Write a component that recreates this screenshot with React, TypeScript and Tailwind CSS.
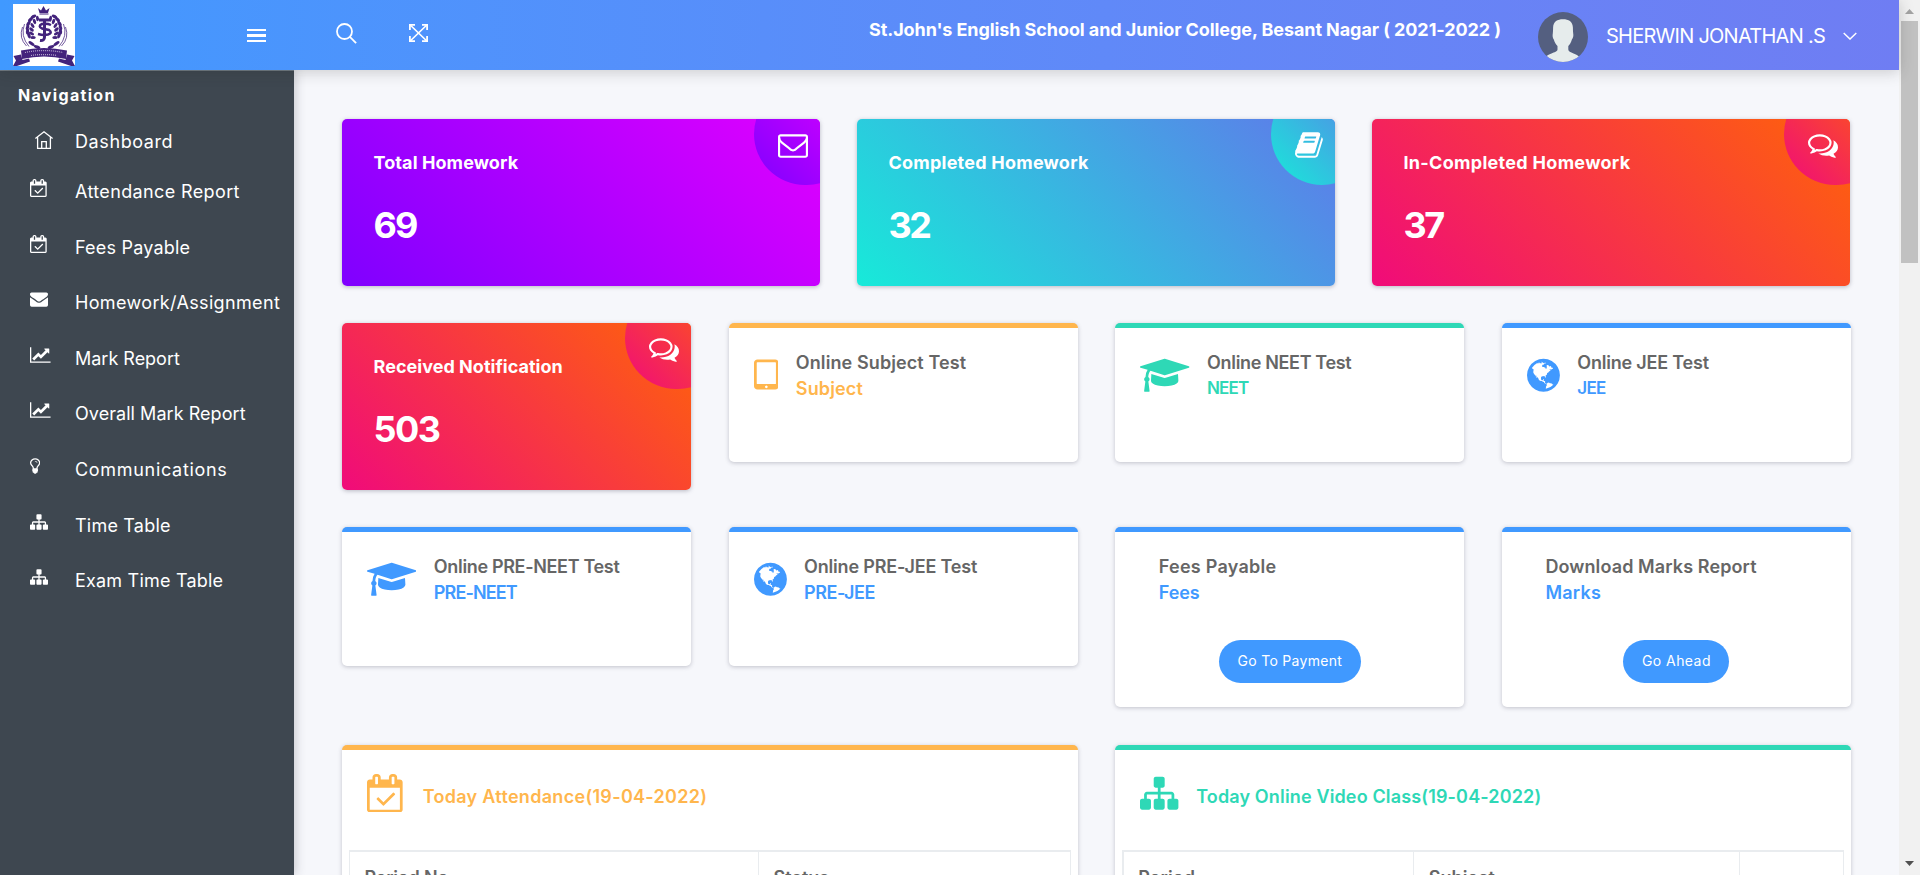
import type { ReactNode } from 'react';

type IconDef = { w: number; d: string };

const ICONS = {
  envelopeO: {
    w: 1792,
    d: 'M1664 1504v-768q-32 36-69 66-268 206-426 338-51 43-83 67t-86.500 48.500-102.500 24.500h-2q-48 0-102.500-24.500t-86.500-48.500-83-67q-158-132-426-338-37-30-69-66v768q0 13 9.500 22.500t22.500 9.500h1472q13 0 22.500-9.500t9.500-22.500zm0-1051v-24.500l-.5-13-3-12.500-5.500-9-9-7.500-14-2.500h-1472q-13 0-22.500 9.500t-9.500 22.500q0 168 147 284 193 152 401 317 6 5 35 29.500t46 37.500 44.500 31.500 50.500 27.500 43 9h2q20 0 43-9t50.500-27.500 44.500-31.500 46-37.500 35-29.500q208-165 401-317 54-43 100.500-115.500t46.500-131.500zm128-37v1088q0 66-47 113t-113 47h-1472q-66 0-113-47t-47-113v-1088q0-66 47-113t113-47h1472q66 0 113 47t47 113z',
  },
  envelope: {
    w: 1792,
    d: 'M1792 710v794q0 66-47 113t-113 47h-1472q-66 0-113-47t-47-113v-794q44 49 101 87 362 246 497 345 57 42 92.500 65.500t94.500 48 110 24.500h2q51 0 110-24.500t94.500-48 92.500-65.500q170-123 498-345 57-39 100-87zm0-294q0 79-49 151t-122 123q-376 261-468 325-10 7-42.500 30.500t-54 38-52 32.500-57.500 27-50 9h-2q-23 0-50-9t-57.500-27-52-32.500-54-38-42.500-30.500q-91-64-262-182.500t-205-142.500q-62-42-117-115.500t-55-136.500q0-78 41.500-130t118.500-52h1472q65 0 112.500 47t47.500 113z',
  },
  lineChart: {
    w: 2048,
    d: 'M2048 1536v128h-2048v-1536h128v1408h1920zm-128-1248v435q0 21-19.500 29.500t-35.500-7.500l-121-121-633 633q-10 10-23 10t-23-10l-233-233-416 416-192-192 585-585q10-10 23-10t23 10l233 233 464-464-121-121q-16-16-7.500-35.500t29.500-19.500h435q14 0 23 9t9 23z',
  },
  sitemap: {
    w: 1792,
    d: 'M1792 1248v320q0 40-28 68t-68 28h-320q-40 0-68-28t-28-68v-320q0-40 28-68t68-28h96v-192h-512v192h96q40 0 68 28t28 68v320q0 40-28 68t-68 28h-320q-40 0-68-28t-28-68v-320q0-40 28-68t68-28h96v-192h-512v192h96q40 0 68 28t28 68v320q0 40-28 68t-68 28h-320q-40 0-68-28t-28-68v-320q0-40 28-68t68-28h96v-192q0-52 38-90t90-38h512v-192h-96q-40 0-68-28t-28-68v-320q0-40 28-68t68-28h320q40 0 68 28t28 68v320q0 40-28 68t-68 28h-96v192h512q52 0 90 38t38 90v192h96q40 0 68 28t28 68z',
  },
  calendar: {
    w: 1664,
    d: 'M1303 964l-512 512q-10 9-23 9t-23-9l-288-288q-9-10-9-23t9-22l46-46q9-9 22-9t23 9l220 220 444-444q10-9 23-9t22 9l46 46q9 9 9 22t-9 23zm-1175 700h1408v-1024h-1408v1024zm384-1216v-288q0-14-9-23t-23-9h-64q-14 0-23 9t-9 23v288q0 14 9 23t23 9h64q14 0 23-9t9-23zm768 0v-288q0-14-9-23t-23-9h-64q-14 0-23 9t-9 23v288q0 14 9 23t23 9h64q14 0 23-9t9-23zm384-64v1280q0 52-38 90t-90 38h-1408q-52 0-90-38t-38-90v-1280q0-52 38-90t90-38h128v-96q0-66 47-113t113-47h64q66 0 113 47t47 113v96h384v-96q0-66 47-113t113-47h64q66 0 113 47t47 113v96h128q52 0 90 38t38 90z',
  },
  comments: {
    w: 1792,
    d: 'M704 384q-153 0-286 52t-211.500 141-78.500 191q0 82 53 158t149 132l97 56-35 84q34-20 62-39l44-31 53 10q78 14 153 14 153 0 286-52t211.500-141 78.500-191-78.500-191-211.500-141-286-52zm0-128q191 0 353.500 68.500t256.500 186.500 94 257-94 257-256.500 186.500-353.500 68.500q-86 0-176-16-124 88-278 128-36 9-86 16h-3q-11 0-20.500-8t-11.500-21q-1-3-1-6.500t.5-6.500 2-6l2.500-5 3.500-5.500 4-5 4.500-5 4-4.500q5-6 23-25t26-29.500 22.500-29 25-38.500 20.500-44q-124-72-195-177t-71-224q0-139 94-257t256.500-186.500 353.500-68.500zm822 1169q10 24 20.500 44t25 38.500 22.500 29 26 29.500 23 25q1 1 4 4.500t4.500 5 4 5 3.500 5.500l2.500 5 2 6 .5 6.500-1 6.500q-3 14-13 22t-22 7q-50-7-86-16-154-40-278-128-90 16-176 16-271 0-472-132 58 4 88 4 161 0 309-45t264-129q125-92 192-212t67-254q0-77-23-152 129 71 204 178t75 230q0 120-71 224.500t-195 176.500z',
  },
  tablet: {
    w: 1152,
    d: 'M640 1440q0-26-19-45t-45-19-45 19-19 45 19 45 45 19 45-19 19-45zm384-160v-960q0-13-9.500-22.500t-22.500-9.500h-832q-13 0-22.500 9.500t-9.500 22.500v960q0 13 9.500 22.500t22.500 9.500h832q13 0 22.500-9.500t9.500-22.500zm128-960v1088q0 66-47 113t-113 47h-832q-66 0-113-47t-47-113v-1088q0-66 47-113t113-47h832q66 0 113 47t47 113z',
  },
  gradCap: {
    w: 2304,
    d: 'M1774 836l18 316q4 69-82 128t-235 93.500-323 34.500-323-34.500-235-93.500-82-128l18-316 574 181q22 7 48 7t48-7zm530-324q0 23-22 31l-1120 352q-4 1-10 1t-10-1l-652-206q-43 34-71 111.500t-34 178.500q63 36 63 109 0 69-58 107l58 433q2 14-8 25-9 11-24 11h-192q-15 0-24-11-10-11-8-25l58-433q-58-38-58-107 0-73 65-111 11-207 98-330l-333-104q-22-8-22-31t22-31l1120-352q4-1 10-1t10 1l1120 352q22 8 22 31z',
  },
  book: {
    w: 1664,
    d: 'M1639 478q40 57 18 129l-275 906q-19 64-76.500 107.500t-122.500 43.500h-923q-77 0-148.500-53.500t-99.500-131.500q-24-67-2-127 0-4 3-27t4-37q1-8-3-21.500t-3-19.500q2-11 8-21t16.500-23.500 16.500-23.500q23-38 45-91.500t30-91.500q3-10 .5-30t-.5-28q3-11 17-28t17-23q21-36 42-92t25-90q1-9-2.500-32t.5-28q4-13 22-30.500t22-22.500q19-26 42.500-84.500t27.500-96.500q1-8-3-25.500t-2-26.500q2-8 9-18t18-23 17-21q8-12 16.500-30.500t15-35 16-36 19.500-32 26.500-23.500 36-11.500 47.500 5.500l-1 3q38-9 51-9h761q74 0 114 56t18 130l-274 906q-36 119-71.500 153.500t-128.500 34.500h-869q-27 0-38 15-11 16-1 43 24 70 144 70h923q29 0 56-15.500t35-41.500l300-987q7-22 5-57 38 15 59 43zm-1064 2q-4 13 2 22.500t20 9.500h608q13 0 25.500-9.500t16.500-22.500l21-64q4-13-2-22.500t-20-9.500h-608q-13 0-25.500 9.500t-16.500 22.500zm-83 256q-4 13 2 22.500t20 9.500h608q13 0 25.500-9.500t16.500-22.500l21-64q4-13-2-22.500t-20-9.500h-608q-13 0-25.500 9.500t-16.500 22.500z',
  },
  bulb: {
    w: 1024,
    d: 'M736 576q0 13-9.500 22.500t-22.500 9.500-22.500-9.500-9.500-22.500q0-46-54-71t-106-25q-13 0-22.500-9.500t-9.500-22.500 9.500-22.500 22.500-9.500q50 0 99.500 16t87 54 37.500 90zm160 0q0-72-34.500-134t-90-101.500-123-62-136.500-22.500-136.500 22.500-123 62-90 101.500-34.500 134q0 101 68 180 10 11 30.500 33t30.500 33q128 153 141 298h228q13-145 141-298 10-11 30.500-33t30.500-33q68-79 68-180zm128 0q0 155-103 268-45 49-74.500 87t-59.500 95.500-34 107.500q47 28 47 82 0 37-25 64 25 27 25 64 0 52-45 81 13 23 13 47 0 46-31.500 71t-77.500 25q-20 44-60 70t-87 26-87-26-60-70q-46 0-77.500-25t-31.500-71q0-24 13-47-45-29-45-81 0-37 25-64-25-27-25-64 0-54 47-82-4-50-34-107.500t-59.500-95.500-74.500-87q-103-113-103-268 0-99 44.500-184.500t117-142 164-89 186.500-32.500 186.500 32.500 164 89 117 142 44.500 184.500z',
  },
} satisfies Record<string, IconDef>;

type IconName = keyof typeof ICONS;

function Icon({ name, className }: { name: IconName; className: string }) {
  const { w, d } = ICONS[name];
  return (
    <svg viewBox={`0 0 ${w} 1792`} className={`w-auto shrink-0 fill-current ${className}`}>
      <path d={d} />
    </svg>
  );
}

function Globe() {
  return (
    <svg viewBox="128 0 1536 1792" className="h-[38.4px] w-auto shrink-0 fill-current">
      <path d="M896 128q209 0 385.500 103t279.500 279.500 103 385.500-103 385.500-279.500 279.500-385.500 103-385.500-103-279.500-279.500-103-385.500 103-385.500 279.500-279.500 385.500-103zm274 521q-2 1-9.500 9.500t-13.500 9.500q2 0 4.500-5t5-11 3.500-7q6-7 22-15 14-6 52-12 34-8 51 11-2-2 9.500-13t14.500-12q3-2 15-4.500t15-7.500l2-22q-12 1-17.500-7t-6.500-21q0 2-6 8 0-7-4.500-8t-11.500 1-9 1q-10-3-15-7.500t-8-16.500-4-15q-2-5-9.500-11t-9.500-10q-1-2-2.500-5.500t-3-6.500-4-5.500-5.500-2.500-7 5-7.500 10-4.500 5q-3-2-6-1.500t-4.500 1-4.500 3-5 3.500q-3 2-8.500 3t-8.500 2q15-5-1-11-10-4-16-3 9-4 7.500-12t-8.500-14h5q-1-4-8.500-8.500t-17.500-8.500-13-6q-8-5-34-9.500t-33-.5q-5 6-4.500 10.500t4 14 3.500 12.500q1 6-5.500 13t-6.500 12q0 7 14 15.500t10 21.500q-3 8-16 16t-16 12q-5 8-1.500 18.500t10.500 16.500q2 2 1.500 4t-3.500 4.500-5.500 4-6.500 3.500l-3 2q-11 5-20.500-6t-13.500-26q-7-25-16-30-23-8-29 1-5-13-41-26-25-9-58-4 6-1 0-15-7-15-19-12 3-6 4-17.500t1-13.500q3-13 12-23 1-1 7-8.500t9.500-13.500.5-6q35 4 50-11 5-5 11.500-17t10.500-17q9-6 14-5.500t14.500 5.500 14.500 5q14 1 15.500-11t-7.500-20q12 1 3-17-4-7-8-9-12-4-27 5-8 4 2 8-1-1-9.500 10.500t-16.500 17.500-16-5q-1-1-5.500-13.500t-9.500-13.500q-8 0-16 15 3-8-11-15t-24-8q19-12-8-27-7-4-20.500-5t-19.500 4q-5 7-5.500 11.500t5 8 10.500 5.500 11.500 4 8.500 3q14 10 8 14-2 1-8.500 3.500t-11.500 4.500-6 4q-3 4 0 14t-2 14q-5-5-9-17.500t-7-16.500q7 9-25 6l-10-1q-4 0-16 2t-20.500 1-13.500-8q-4-8 0-20 1-4 4-2-4-3-11-9.500t-10-8.500q-46 15-94 41 6 1 12-1 5-2 13-6.500t10-5.500q34-14 42-7l5-5q14 16 20 25-7-4-30-1-20 6-22 12 7 12 5 18-4-3-11.500-10t-14.500-11-15-5q-16 0-22 1-146 80-235 222 7 7 12 8 4 1 5 9t2.500 11 11.500-3q9 8 3 19 1-1 44 27 19 17 21 21 3 11-10 18-1-2-9-9t-9-4q-3 5 .5 18.500t10.500 12.500q-7 0-9.500 16t-2.500 35.500-1 23.500l2 1q-3 12 5.500 34.500t21.500 19.500q-13 3 20 43 6 8 8 9 3 2 12 7.500t15 10 10 10.500q4 5 10 22.500t14 23.500q-2 6 9.500 20t10.500 23q-1 0-2.500 1t-2.500 1q3 7 15.500 14t15.500 13q1 3 2 10t3 11 8 2q2-20-24-62-15-25-17-29-3-5-5.500-15.500t-4.500-14.500q2 0 6 1.500t8.500 3.500 7.500 4 2 3q-3 7 2 17.500t12 18.500 17 19 12 13q6 6 14 19.500t0 13.500q9 0 20 10.500t17 19.500q5 8 8 26t5 24q2 7 8.500 13.500t12.500 9.500l16 8 13 7q5 2 18.500 10.500t21.500 11.500q10 4 16 4t14.500-2.500 13.500-3.500q15-2 29 15t21 21q36 19 55 11-2 1 .5 7.500t8 15.500 9 14.500 5.500 8.500q5 6 18 15t18 15q6-4 7-9-3 8 7 20t18 10q14-3 14-32-31 15-49-18 0-1-2.500-5.500t-4-8.500-2.500-8.500 0-7.500 5-3q9 0 10-3.500t-2-12.500-4-13q-1-8-11-20t-12-15q-5 9-16 8t-16-9q0 1-1.500 5.500t-1.500 6.500q-13 0-15-1 1-3 2.500-17.500t3.500-22.500q1-4 5.500-12t7.500-14.500 4-12.500-4.500-9.500-17.500-2.500q-19 1-26 20-1 3-3 10.500t-5 11.500-9 7q-7 3-24 2t-24-5q-13-8-22.500-29t-9.500-37q0-10 2.500-26.500t3-25-5.500-24.500q3-2 9-9.500t10-10.500q2-1 4.500-1.500t4.500 0 4-1.500 3-6q-1-1-4-3-3-3-4-3 7 3 28.500-1.500t27.500 1.500q15 11 22-2 0-1-2.500-9.500t-.5-13.500q5 27 29 9 3 3 15.500 5t17.500 5q3 2 7 5.500t5.500 4.500 5-.5 8.500-6.500q10 14 12 24 11 40 19 44 7 3 11 2t4.500-9.500 0-14-1.500-12.500l-1-8v-18l-1-8q-15-3-18.500-12t1.500-18.500 15-18.500q1-1 8-3.500t15.500-6.500 12.500-8q21-19 15-35 7 0 11-9-1 0-5-3t-7.500-5-4.500-2q9-5 2-16 5-3 7.500-11t7.500-10q9 12 21 2 8-8 1-16 5-7 20.500-10.500t18.500-9.500q7 2 8-2t1-12 3-12q4-5 15-9t13-5l17-11q3-4 0-4 18 2 31-11 10-11-6-20 3-6-3-9.500t-15-5.500q3-1 11.500-.5t10.500-1.500q15-10-7-16-17-5-43 12zm-163 877q206-36 351-189-3-3-12.500-4.500t-12.500-3.500q-18-7-24-8 1-7-2.500-13t-8-9-12.500-8-11-7q-2-2-7-6t-7-5.500-7.500-4.500-8.500-2-10 1l-3 1q-3 1-5.500 2.500t-5.500 3-4 3 0 2.500q-21-17-36-22-5-1-11-5.500t-10.500-7-10-1.500-11.500 7q-5 5-6 15t-2 13q-7-5 0-17.500t2-18.500q-3-6-10.500-4.500t-12 4.500-11.500 8.500-9 6.500-8.500 5.500-8.500 7.500q-3 4-6 12t-5 11q-2-4-11.500-6.500t-9.500-5.500q2 10 4 35t5 38q7 31-12 48-27 25-29 40-4 22 12 26 0 7-8 20.500t-7 21.500q0 6 2 16z" />
    </svg>
  );
}

function HomeIcon() {
  return (
    <svg viewBox="0 0 18 18" className="size-[18px] shrink-0 fill-none stroke-white" strokeWidth="1.3">
      <path d="M.4 7.600 9 .8l8.600 6.800M2.600 6.200v11.200h12.800V6.200M6.700 17.400v-6.700h4.600v6.700" />
    </svg>
  );
}

const LEAVES = [
  [16, 58, -20], [13, 50, 5], [13, 42, 20], [15, 34, 35], [19, 26, 50], [25, 20, 62],
];

function Logo() {
  return (
    <svg viewBox="0 0 124 124" className="size-[62px] shrink-0 bg-white">
      <g fill="#43237c">
        <path d="M50 8l6 5 5-9 5 9 7-5-3 10H53z" />
        <path d="M53 19h18v2H53z" />
        {LEAVES.map(([x, y, r], i) => (
          <g key={i}>
            <ellipse cx={x + 16} cy={y + 5} rx="3.2" ry="6" transform={`rotate(${r} ${x + 16} ${y + 5})`} />
            <ellipse cx={x + 24} cy={y + 9} rx="3" ry="5.500" transform={`rotate(${r - 70} ${x + 24} ${y + 9})`} />
            <ellipse cx={108 - x} cy={y + 5} rx="3.200" ry="6" transform={`rotate(${-r} ${108 - x} ${y + 5})`} />
            <ellipse cx={100 - x} cy={y + 9} rx="3" ry="5.500" transform={`rotate(${70 - r} ${100 - x} ${y + 9})`} />
          </g>
        ))}
        <ellipse cx="37" cy="79" rx="3" ry="7" transform="rotate(-55 37 79)" />
        <ellipse cx="87" cy="79" rx="3" ry="7" transform="rotate(55 87 79)" />
        <ellipse cx="48" cy="86" rx="3" ry="7" transform="rotate(-70 48 86)" />
        <ellipse cx="76" cy="86" rx="3" ry="7" transform="rotate(70 76 86)" />
        <path d="M16 93q46-10 92 0l-2 17q-44-10-88 0z" />
        <path d="M1 104l15-3 3 11 13-3 2 6-26 9-8 0 6-11zM123 104l-15-3-3 11-13-3-2 6 26 9 8 0-6-11z" />
      </g>
      <g fill="none" stroke="#43237c">
        <path d="M19 46q-8 22 8 38M23 40q-9 24 9 45M105 46q8 22-8 38M101 40q9 24-9 45" strokeWidth="1.500" />
        <path d="M52 32h24M63 32v34q0 8-9 7" strokeWidth="6" />
        <path d="M76 42q-8-4-18-2-9 4 0 9l14 3q8 6-2 9-9 2-20-1" strokeWidth="5" />
      </g>
      <path d="M24 97q38-8 76 0M36 103q26-4 52 0" fill="none" stroke="#fff" strokeWidth="2.500" strokeDasharray="2 2" opacity=".6" />
    </svg>
  );
}

function Avatar() {
  return (
    <svg viewBox="0 0 50 50" className="size-[50px] shrink-0 rounded-full bg-[#545f80]">
      <path
        d="M25 7.300c5.500 0 9.800 2.200 9.900 8.200 0 2 .1 4 .3 6 .5 2-.1 4.500-1.300 6-.8 2.800-2 4.900-3.600 6.500v3.500c0 1.800 2.300 2.900 5.200 3.900 2.600.9 4.500 1.800 6 3.600V50h-34v-5c1.500-1.800 3.400-2.700 6-3.600 2.900-1 6-2.100 6-3.900V34c-1.600-1.600-2.900-3.700-3.700-6.500-1.200-1.500-1.400-4-1-6 .2-2 .3-4 .3-6C15.200 9.500 19.500 7.300 25 7.300z"
        fill="#e6ecec"
      />
    </svg>
  );
}

function Header() {
  return (
    <header className="relative z-10 flex h-[70px] shrink-0 items-start bg-linear-to-r from-[#4099ff] to-[#6f7df3] text-white shadow-[0_2px_14px_rgba(43,43,43,0.22)]">
      <div className="flex h-[70px] w-[294px] items-start justify-between pt-1 pr-7 pl-[13px]">
        <Logo />
        <div className="mt-[24.500px] flex w-[19px] flex-col gap-[3px]">
          <div className="h-[2.600px] bg-white" />
          <div className="h-[2.600px] bg-white" />
          <div className="h-[2.600px] bg-white" />
        </div>
      </div>
      <svg viewBox="0 0 21 21" className="mt-[22.500px] ml-[42px] size-[21px] fill-none stroke-white" strokeWidth="1.800">
        <circle cx="8.500" cy="8.500" r="7.500" />
        <path d="M13.900 13.900l6.200 6.200" />
      </svg>
      <svg viewBox="0 0 19 18" className="mt-6 ml-[52px] h-[18px] w-[19px] fill-none stroke-white" strokeWidth="1.700">
        <path d="M1.200 1l16.600 16M17.800 1L1.200 17" />
        <path d="M.9 6V.9H6M13 .9h5.100V6M.9 12v5.100H6M13 17.100h5.100V12" strokeWidth="1.800" />
      </svg>
      <div className="ml-auto pt-[18px] text-lg leading-6 font-bold tracking-[-0.085px] whitespace-nowrap">
        St.John's English School and Junior College, Besant Nagar ( 2021-2022 )
      </div>
      <div className="mt-3 ml-[37.500px]">
        <Avatar />
      </div>
      <div className="mt-[24px] ml-[17.500px] text-xl leading-6 tracking-[-0.740px] whitespace-nowrap">
        SHERWIN JONATHAN .S
      </div>
      <svg viewBox="0 0 14 8" className="mt-8 mr-[42px] ml-[18px] h-2 w-[14px] fill-none stroke-white" strokeWidth="1.400">
        <path d="M.7.900L7 7.100 13.300.9" />
      </svg>
    </header>
  );
}

const NAV: { icon: IconName; label: string; track: string }[] = [
  { icon: 'calendar', label: 'Attendance Report', track: 'tracking-[0.370px]' },
  { icon: 'calendar', label: 'Fees Payable', track: 'tracking-[0.200px]' },
  { icon: 'envelope', label: 'Homework/Assignment', track: 'tracking-[0.350px]' },
  { icon: 'lineChart', label: 'Mark Report', track: 'tracking-[-0.010px]' },
  { icon: 'lineChart', label: 'Overall Mark Report', track: 'tracking-[0.050px]' },
  { icon: 'bulb', label: 'Communications', track: 'tracking-[0.690px]' },
  { icon: 'sitemap', label: 'Time Table', track: 'tracking-[0.210px]' },
  { icon: 'sitemap', label: 'Exam Time Table', track: 'tracking-[0.200px]' },
];

function Sidebar() {
  return (
    <nav className="w-[294px] shrink-0 border-t border-[#717b83] bg-[#3e4750] text-lg text-white shadow-[1px_0_10px_rgba(43,43,60,0.25)]">
      <div className="flex h-[48.300px] items-center pl-[18px] text-base font-bold tracking-[1.330px]">Navigation</div>
      <div className="flex h-[44.400px] items-center">
        <div className="w-[75px] pb-[2px] pl-[35px]">
          <HomeIcon />
        </div>
        <span className="pt-px tracking-[0.600px]">Dashboard</span>
      </div>
      {NAV.map((n) => (
        <div key={n.label} className="flex h-[55.600px] items-center">
          <div className="w-[75px] pb-[7px] pl-[30px]">
            <Icon name={n.icon} className="h-[18px]" />
          </div>
          <span className={`pt-px whitespace-nowrap ${n.track}`}>{n.label}</span>
        </div>
      ))}
    </nav>
  );
}

function StatCard({
  title, track, value, valueTrack, bg, icon, badge,
}: {
  title: string; track: string; value: string; valueTrack: string; bg: string; icon: IconName; badge: string;
}) {
  return (
    <div className={`relative h-[166.500px] overflow-hidden rounded-[5px] pt-8 pl-[31.500px] text-white shadow-[0_1px_4px_rgba(69,70,92,0.35)] ${bg}`}>
      <div className={`text-lg leading-6 font-bold ${track}`}>{title}</div>
      <div className={`mt-[25.500px] text-4xl leading-[48px] font-bold ${valueTrack}`}>{value}</div>
      <div className={`absolute -top-9 -right-[38px] h-[102px] rounded-full pt-[47px] pl-6 ${badge} ${bg}`}>
        <Icon name={icon} className="h-[30px]" />
      </div>
    </div>
  );
}

function Card({ border, className, children }: { border: string; className: string; children: ReactNode }) {
  return (
    <div className={`rounded-[5px] border-t-[5px] bg-white shadow-[0_1px_4px_rgba(69,70,92,0.3)] ${border} ${className}`}>
      {children}
    </div>
  );
}

function TestCard({
  border, tone, icon, gap, title, titleTrack, sub, subTrack, action, actionTrack,
}: {
  border: string; tone: string; icon?: ReactNode; gap: string; title: string; titleTrack: string;
  sub: string; subTrack: string; action?: string; actionTrack?: string;
}) {
  return (
    <Card border={border} className={`self-start pt-[22px] ${action ? 'h-[180px]' : 'h-[138.500px]'}`}>
      <div className={`flex items-start pl-[25px] ${tone}`}>
        {icon && <div className="mt-[5.500px]">{icon}</div>}
        <div className={`text-lg leading-[25.600px] font-semibold whitespace-nowrap ${gap}`}>
          <div className={`text-[#666] ${titleTrack}`}>{title}</div>
          <div className={subTrack}>{sub}</div>
        </div>
      </div>
      {action && (
        <div className="mt-[34.500px] flex justify-center">
          <button className={`h-[43px] rounded-full bg-[#4099ff] px-[18.500px] text-sm whitespace-nowrap text-white ${actionTrack}`}>
            {action}
          </button>
        </div>
      )}
    </Card>
  );
}

function Scrollbar() {
  return (
    <div className="flex h-full w-[21px] shrink-0 flex-col items-center bg-[#f1f1f1]">
      <svg viewBox="0 0 21 21" className="h-[21px] w-[21px] shrink-0">
        <path d="M6 14l4.500-5 4.500 5z" fill="#a3a3a3" />
      </svg>
      <div className="h-[242px] w-[17px] bg-[#c1c1c1]" />
      <svg viewBox="0 0 21 21" className="mt-auto h-[21px] w-[21px] shrink-0">
        <path d="M6 7l4.500 5L15 7z" fill="#505050" />
      </svg>
    </div>
  );
}

const FIRE = 'bg-[linear-gradient(45deg,#f00b7a,#ff6408)]';
const BLUE = 'border-[#4099ff]';

export default function App() {
  return (
    <div className="flex h-[875px] w-[1920px] overflow-hidden bg-[#f6f7fb] font-['Inter',sans-serif]">
      <div className="flex min-w-0 flex-1 flex-col">
        <Header />
        <div className="flex min-h-0 flex-1">
          <Sidebar />
          <main className="flex flex-1 flex-col gap-[37.500px] overflow-hidden pt-[49px] pr-[48px] pl-[48px]">
            <div className="mr-px grid shrink-0 grid-cols-3 gap-[37px]">
              <StatCard title="Total Homework" track="tracking-[0.090px]" value="69" valueTrack="tracking-[-2px]" bg="bg-[linear-gradient(45deg,#7f00ff,#e100ff)]" icon="envelopeO" badge="w-[104px]" />
              <StatCard title="Completed Homework" track="tracking-[0.230px]" value="32" valueTrack="tracking-[-2.500px]" bg="bg-[linear-gradient(45deg,#17ead9,#6078ea)]" icon="book" badge="w-[102px]" />
              <StatCard title="In-Completed Homework" track="tracking-[0.300px]" value="37" valueTrack="tracking-[-2.500px]" bg={FIRE} icon="comments" badge="w-[104px]" />
            </div>
            <div className="grid h-[166.500px] shrink-0 grid-cols-4 gap-[37.500px]">
              <StatCard title="Received Notification" track="tracking-[0.030px]" value="503" valueTrack="tracking-[-1.500px]" bg={FIRE} icon="comments" badge="w-[104px]" />
              <TestCard border="border-[#ffb64d]" tone="text-[#ffb64d]" icon={<Icon name="tablet" className="h-[38.400px]" />} gap="pl-[17.500px]" title="Online Subject Test" titleTrack="tracking-[0.100px]" sub="Subject" subTrack="tracking-[0.150px]" />
              <TestCard border="border-[#2ed8b6]" tone="text-[#2ed8b6]" icon={<Icon name="gradCap" className="h-[38.400px]" />} gap="pl-[17.500px]" title="Online NEET Test" titleTrack="tracking-[-0.340px]" sub="NEET" subTrack="text-[17px] tracking-[-0.900px]" />
              <TestCard border={BLUE} tone="text-[#4099ff]" icon={<Globe />} gap="pl-[17.500px]" title="Online JEE Test" titleTrack="tracking-[-0.200px]" sub="JEE" subTrack="text-[17px] tracking-[-0.700px]" />
            </div>
            <div className="grid shrink-0 grid-cols-4 gap-[37.500px]">
              <TestCard border={BLUE} tone="text-[#4099ff]" icon={<Icon name="gradCap" className="h-[38.400px]" />} gap="pl-[17.500px]" title="Online PRE-NEET Test" titleTrack="tracking-[-0.340px]" sub="PRE-NEET" subTrack="tracking-[-0.900px]" />
              <TestCard border={BLUE} tone="text-[#4099ff]" icon={<Globe />} gap="pl-[17.500px]" title="Online PRE-JEE Test" titleTrack="tracking-[-0.170px]" sub="PRE-JEE" subTrack="tracking-[-0.450px]" />
              <TestCard border={BLUE} tone="text-[#4099ff]" gap="pl-[18.500px]" title="Fees Payable" titleTrack="tracking-[0.260px]" sub="Fees" subTrack="tracking-[-0.080px]" action="Go To Payment" actionTrack="tracking-[0.290px]" />
              <TestCard border={BLUE} tone="text-[#4099ff]" gap="pl-[18.500px]" title="Download Marks Report" titleTrack="tracking-[0.110px]" sub="Marks" subTrack="tracking-[0.250px]" action="Go Ahead" actionTrack="tracking-[0.450px]" />
            </div>
            <div className="grid shrink-0 grid-cols-2 gap-[37.500px]">
              <Card border="border-[#ffb64d]" className="h-[400px] px-[7px]">
                <div className="flex h-[100px] items-start pt-[24.500px] pl-[18px] text-[#ffb64d]">
                  <Icon name="calendar" className="h-[38.400px]" />
                  <span className="mt-[10.500px] pl-[20px] text-lg leading-6 font-semibold tracking-[0.310px]">Today Attendance(19-04-2022)</span>
                </div>
                <div className="grid h-[300px] grid-cols-[409px_1fr] border border-t-2 border-[#e9ecef] text-lg leading-6 font-semibold text-[#666]">
                  <div className="border-r border-[#e9ecef] pt-[14px] pl-[14.500px] tracking-[-0.200px]">Period No</div>
                  <div className="pt-[14px] pl-[14.500px]">Status</div>
                </div>
              </Card>
              <Card border="border-[#2ed8b6]" className="h-[400px] px-[7px]">
                <div className="flex h-[100px] items-start pt-[24.500px] pl-[18px] text-[#2ed8b6]">
                  <Icon name="sitemap" className="h-[38.400px]" />
                  <span className="mt-[10.500px] pl-[17.500px] text-lg leading-6 font-semibold tracking-[0.150px]">Today Online Video Class(19-04-2022)</span>
                </div>
                <div className="grid h-[300px] grid-cols-[290px_326px_1fr] border border-t-2 border-l-2 border-[#e9ecef] text-lg leading-6 font-semibold text-[#666]">
                  <div className="border-r border-[#e9ecef] pt-[14px] pl-[14px] tracking-[0.100px]">Period</div>
                  <div className="border-r border-[#e9ecef] pt-[14px] pl-[14.500px]">Subject</div>
                  <div />
                </div>
              </Card>
            </div>
          </main>
        </div>
      </div>
      <Scrollbar />
    </div>
  );
}
